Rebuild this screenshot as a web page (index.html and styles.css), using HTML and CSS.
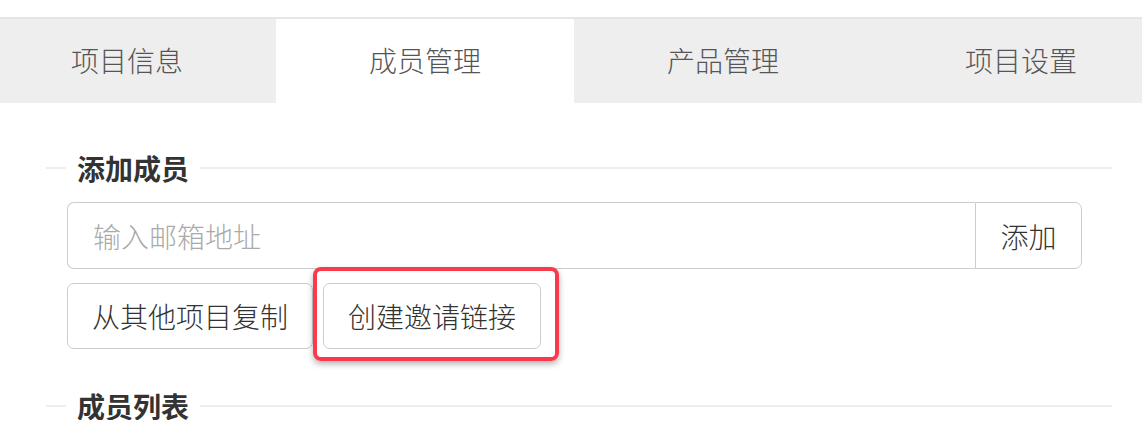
FILE: index.html
```html
<!DOCTYPE html>
<html lang="zh-CN">
<head>
    <meta charset="UTF-8">
    <meta name="viewport" content="width=device-width, initial-scale=1.0">
    <title>成员管理</title>
    <link rel="stylesheet" href="styles.css">
</head>
<body>
    <div class="tabs">
        <div class="tab">项目信息</div>
        <div class="tab active">成员管理</div>
        <div class="tab">产品管理</div>
        <div class="tab">项目设置</div>
    </div>

    <div class="panel">
        <div class="section-title"><span>添加成员</span></div>

        <div class="input-group">
            <input type="text" class="email-input" placeholder="输入邮箱地址">
            <button class="add-btn">添加</button>
        </div>

        <div class="actions">
            <button class="btn">从其他项目复制</button>
            <span class="highlight">
                <button class="btn">创建邀请链接</button>
            </span>
        </div>

        <div class="section-title second"><span>成员列表</span></div>
    </div>
</body>
</html>
```

FILE: styles.css
```css
body {
    margin: 0;
    font-family: "Noto Sans CJK SC", "Liberation Sans", sans-serif;
    background: #fff;
    overflow: hidden;
}
.tabs {
    display: flex;
    margin-top: 17px;
    margin-left: -22px;
    border-top: 2px solid #e6e6e6;
}
.tab {
    flex: 0 0 298px;
    height: 84px;
    line-height: 82px;
    text-align: center;
    font-size: 28px;
    font-weight: 300;
    color: #555;
    background: #eee;
}
.tab.active {
    background: #fff;
}
.panel {
    padding: 0 30px 0 46px;
}
.section-title {
    display: flex;
    align-items: center;
    height: 28px;
    margin-top: 51px;
    font-size: 28px;
    font-weight: bold;
    color: #333;
}
.section-title::before {
    content: "";
    width: 20px;
    border-top: 2px solid #eee;
}
.section-title::after {
    content: "";
    flex: 1;
    border-top: 2px solid #eee;
}
.section-title span {
    padding: 0 11px;
    line-height: 28px;
}
.section-title.second {
    margin-top: 43px;
}
.input-group {
    display: flex;
    height: 67px;
    margin: 20px 30px 0 21px;
}
.email-input {
    flex: 1;
    min-width: 0;
    box-sizing: border-box;
    height: 67px;
    padding: 0 25px;
    border: 1.5px solid #ccc;
    border-right: none;
    border-radius: 7px 0 0 7px;
    font-family: inherit;
    font-size: 28px;
    font-weight: 300;
    color: #333;
    outline: none;
}
.email-input::placeholder {
    color: #aaa;
}
.add-btn {
    width: 107px;
    height: 67px;
    border: 1.5px solid #ccc;
    border-radius: 0 7px 7px 0;
    background: #fff;
    font-family: inherit;
    font-size: 28px;
    font-weight: 300;
    color: #333;
    padding: 0;
}
.actions {
    display: flex;
    gap: 10px;
    margin: 14px 30px 0 21px;
}
.btn {
    height: 66px;
    padding: 0 24px;
    border: 1.5px solid #ccc;
    border-radius: 7px;
    background: #fff;
    font-family: inherit;
    font-size: 28px;
    font-weight: 300;
    color: #333;
}
.highlight {
    position: relative;
    display: inline-block;
}
.highlight::after {
    content: "";
    position: absolute;
    top: -16px;
    left: -10px;
    right: -18px;
    bottom: -12px;
    border: 4px solid #fa3a4b;
    border-radius: 8px;
    box-shadow: 0 3px 6px rgba(0,0,0,0.3);
    pointer-events: none;
}
```
